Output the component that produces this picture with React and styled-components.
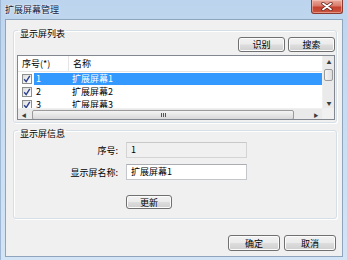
import React from "react";
import styled, { createGlobalStyle } from "styled-components";

const rows = [
  { id: 1, name: "扩展屏幕1", selected: true },
  { id: 2, name: "扩展屏幕2" },
  { id: 3, name: "扩展屏幕3" },
];

const App = () => {
  return (
    <>
      <GlobalStyle />
      <Window>
        <TitleBar>
          <Title>扩展屏幕管理</Title>
          <CloseButton>
            <svg width="12" height="9" viewBox="0 0 12 9">
              <path d="M2 1.5 L10 7.5 M10 1.5 L2 7.5" stroke="#5a1a14" strokeWidth="3.2" strokeLinecap="round" />
              <path d="M2 1.5 L10 7.5 M10 1.5 L2 7.5" stroke="#ffffff" strokeWidth="1.8" strokeLinecap="round" />
            </svg>
          </CloseButton>
        </TitleBar>
        <Client>
          <Group>
            <Legend>显示屏列表</Legend>
            <Toolbar>
              <Button $w={47}>识别</Button>
              <Button $w={47}>搜索</Button>
            </Toolbar>
            <ListBox>
              <ListBody>
                <HeaderRow>
                  <HeaderCell $w={51}>序号(*)</HeaderCell>
                  <HeaderCell>名称</HeaderCell>
                </HeaderRow>
                {rows.map((r) => (
                  <Row key={r.id}>
                    <CheckCell>
                      <CheckBox>
                        <svg width="8" height="8" viewBox="0 0 8 8">
                          <path d="M1.2 4.2 L3.2 6.6 L6.8 0.8" stroke="#2a3f8f" strokeWidth="1.4" fill="none" />
                        </svg>
                      </CheckBox>
                      <RowText $sel={r.selected} $w={33}>{r.id}</RowText>
                    </CheckCell>
                    <RowText $sel={r.selected} $grow>{r.name}</RowText>
                  </Row>
                ))}
              </ListBody>
              <VScroll>
                <Arrow>▲</Arrow>
                <VTrack>
                  <VThumb />
                </VTrack>
                <Arrow>▼</Arrow>
              </VScroll>
              <HScroll>
                <Arrow>◀</Arrow>
                <HTrack>
                  <HThumb>
                    <Grip />
                  </HThumb>
                </HTrack>
                <Arrow>▶</Arrow>
              </HScroll>
              <Corner />
            </ListBox>
          </Group>

          <Group $info>
            <Legend $info>显示屏信息</Legend>
            <Form>
              <Label>序号:</Label>
              <Field $disabled>1</Field>
              <Label>显示屏名称:</Label>
              <Field>扩展屏幕1</Field>
              <span />
              <Button $w={46} $h={14} $mt={9}>更新</Button>
            </Form>
          </Group>

          <Footer>
            <Button $w={52} $h={16}>确定</Button>
            <Button $w={52} $h={16}>取消</Button>
          </Footer>
        </Client>
      </Window>
    </>
  );
};

export default App;

// ======== Global ========

const GlobalStyle = createGlobalStyle`
  html, body {
    margin: 0;
    padding: 0;
    background: #ffffff;
  }
  body {
    font-family: "Noto Sans CJK SC", "DejaVu Sans", sans-serif;
    font-size: 9px;
    color: #000;
  }
`;

// ======== Window frame ========

const Window = styled.div`
  width: 347px;
  height: 260px;
  box-sizing: border-box;
  display: flex;
  flex-direction: column;
  background: linear-gradient(180deg, #bcd4ed 0%, #c6dbf1 30%, #d3e4f5 100%);
  border-left: 1px solid #9fb8d6;
`;

const TitleBar = styled.div`
  height: 19px;
  display: flex;
  align-items: flex-start;
  padding-left: 4px;
`;

const Title = styled.div`
  margin-top: 4px;
  font-size: 9px;
  line-height: 11px;
  color: #14203a;
  text-shadow: 0 0 3px #eaf3fc, 0 0 2px #ffffff;
`;

const CloseButton = styled.div`
  margin-left: auto;
  margin-right: 4px;
  width: 32px;
  height: 14px;
  box-sizing: border-box;
  border: 1px solid #8a3a33;
  border-top: none;
  border-radius: 0 0 3px 3px;
  background: linear-gradient(180deg, #e9a99b 0%, #d97a6a 45%, #c6402f 55%, #c9553f 100%);
  box-shadow: inset 0 0 0 1px rgba(255, 210, 200, 0.5);
  display: flex;
  align-items: center;
  justify-content: center;
`;

const Client = styled.div`
  flex: 1;
  margin: 0 4px 3px 4px;
  background: #f0f0f0;
  border: 1px solid #8fa4bd;
  padding: 2px 5px 0 7px;
  display: flex;
  flex-direction: column;
`;

// ======== Group boxes ========

const Group = styled.fieldset`
  margin: 0;
  padding: 0 1px ${(p) => (p.$info ? "9px" : "2px")} 3px;
  border: 1px solid #d5dfe5;
  border-radius: 3px;
  box-shadow: inset 1px 1px 0 #ffffff, 1px 1px 0 #ffffff;
  min-width: 0;
`;

const Legend = styled.legend`
  padding: ${(p) => (p.$info ? "6px" : "7px")} 1px 0 2px;
  margin-left: 1px;
  line-height: 9px;
  font-size: 9px;
`;

const Toolbar = styled.div`
  display: flex;
  justify-content: flex-end;
  gap: 3px;
  margin-top: -1px;
`;

const Button = styled.div`
  width: ${(p) => p.$w}px;
  height: ${(p) => p.$h || 15}px;
  margin-top: ${(p) => p.$mt || 0}px;
  box-sizing: border-box;
  border: 1px solid #707070;
  border-radius: 3px;
  background: linear-gradient(180deg, #f2f2f2 0%, #ebebeb 48%, #dddddd 52%, #cfcfcf 100%);
  box-shadow: inset 0 0 0 1px #fbfbfb;
  display: flex;
  align-items: center;
  justify-content: center;
  font-size: 9px;
  line-height: 9px;
`;

// ======== List view ========

const ListBox = styled.div`
  margin-top: 3px;
  height: 65px;
  box-sizing: border-box;
  border: 1px solid #828790;
  background: #fff;
  display: grid;
  grid-template-columns: 1fr 12px;
  grid-template-rows: 1fr 11px;
  overflow: hidden;
`;

const ListBody = styled.div`
  overflow: hidden;
`;

const HeaderRow = styled.div`
  display: flex;
  height: 15px;
  border-bottom: 1px solid #e5e5e5;
`;

const HeaderCell = styled.div`
  width: ${(p) => (p.$w ? `${p.$w}px` : "auto")};
  flex: ${(p) => (p.$w ? "none" : "1")};
  padding-left: 4px;
  box-sizing: border-box;
  border-right: ${(p) => (p.$w ? "1px solid #e5e5e5" : "none")};
  line-height: 15px;
`;

const Row = styled.div`
  display: flex;
  align-items: center;
  height: 13px;
`;

const CheckCell = styled.div`
  display: flex;
  align-items: center;
  padding-left: 4px;
`;

const CheckBox = styled.div`
  width: 10px;
  height: 10px;
  box-sizing: border-box;
  border: 1px solid #8e8f8f;
  background: linear-gradient(135deg, #dcdcdc 0%, #f4f4f4 60%, #ffffff 100%);
  display: flex;
  align-items: center;
  justify-content: center;
  margin-right: 2px;
`;

const RowText = styled.div`
  height: 12px;
  line-height: 12px;
  width: ${(p) => (p.$w ? `${p.$w}px` : "auto")};
  flex: ${(p) => (p.$grow ? "1" : "none")};
  padding-left: ${(p) => (p.$grow ? "5px" : "2px")};
  box-sizing: border-box;
  background: ${(p) => (p.$sel ? "#3399ff" : "transparent")};
  color: ${(p) => (p.$sel ? "#ffffff" : "#000000")};
`;

const VScroll = styled.div`
  display: flex;
  flex-direction: column;
  background: #eaeaea;
  border-left: 1px solid #f0f0f0;
`;

const Arrow = styled.div`
  width: 12px;
  height: 11px;
  flex: none;
  display: flex;
  align-items: center;
  justify-content: center;
  font-size: 5px;
  color: #3c3c3c;
`;

const VTrack = styled.div`
  flex: 1;
  padding-top: 2px;
`;

const VThumb = styled.div`
  height: 10px;
  margin: 0 1px;
  border: 1px solid #9a9a9a;
  border-radius: 2px;
  background: linear-gradient(90deg, #f4f4f4, #dedede);
`;

const HScroll = styled.div`
  display: flex;
  background: #eaeaea;
  border-top: 1px solid #f0f0f0;
`;

const HTrack = styled.div`
  flex: 1;
  padding: 1px 16px 0 2px;
`;

const HThumb = styled.div`
  height: 8px;
  border: 1px solid #9a9a9a;
  border-radius: 2px;
  background: linear-gradient(180deg, #f4f4f4, #d8d8d8);
  display: flex;
  align-items: center;
  justify-content: center;
`;

const Grip = styled.div`
  width: 5px;
  height: 4px;
  background: repeating-linear-gradient(90deg, #555 0 1px, transparent 1px 2px);
`;

const Corner = styled.div`
  background: #f0f0f0;
`;

// ======== Info form ========

const Form = styled.div`
  display: grid;
  grid-template-columns: 101px 121px;
  column-gap: 8px;
  row-gap: 6px;
  align-items: center;
  padding-top: 4px;
`;

const Label = styled.div`
  text-align: right;
`;

const Field = styled.div`
  height: 16px;
  box-sizing: border-box;
  border: 1px solid ${(p) => (p.$disabled ? "#d4d4d4" : "#c4c7cc")};
  border-top-color: ${(p) => (p.$disabled ? "#c8c8c8" : "#abadb3")};
  background: ${(p) => (p.$disabled ? "#f0f0f0" : "#ffffff")};
  padding-left: 4px;
  line-height: 14px;
`;

// ======== Footer ========

const Footer = styled.div`
  display: flex;
  justify-content: flex-end;
  gap: 4px;
  margin-top: 16px;
  padding-right: 1px;
`;
